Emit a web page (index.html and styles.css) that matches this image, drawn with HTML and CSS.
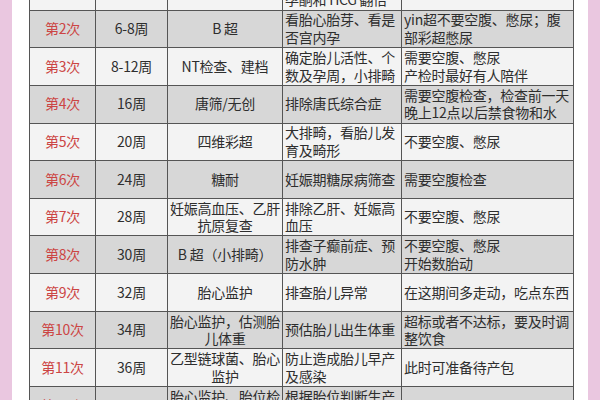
FILE: index.html
```html
<!DOCTYPE html>
<html lang="zh">
<head>
<meta charset="utf-8">
<link rel="stylesheet" href="styles.css">
</head>
<body>
<div class="page">
  <div class="strip"></div>
  <div class="sheet">
    <table class="plan">
      <colgroup>
        <col class="c1"><col class="c2"><col class="c3"><col class="c4"><col class="c5">
      </colgroup>
      <tbody>
        <tr><td class="no">第1次</td><td class="mid">5-6周</td><td class="mid">验血</td><td class="txt">确定是否怀孕，<br>孕酮和 HCG 翻倍</td><td class="txt">需要空腹</td></tr>
        <tr><td class="no">第2次</td><td class="mid">6-8周</td><td class="mid">B 超</td><td class="txt">看胎心胎芽、看是<br>否宫内孕</td><td class="txt">yin超不要空腹、憋尿；腹<br>部彩超憋尿</td></tr>
        <tr><td class="no">第3次</td><td class="mid">8-12周</td><td class="mid">NT检查、建档</td><td class="txt">确定胎儿活性、个<br>数及孕周，小排畸</td><td class="txt">需要空腹、憋尿<br>产检时最好有人陪伴</td></tr>
        <tr><td class="no">第4次</td><td class="mid">16周</td><td class="mid">唐筛/无创</td><td class="txt">排除唐氏综合症</td><td class="txt">需要空腹检查，检查前一天<br>晚上12点以后禁食物和水</td></tr>
        <tr><td class="no">第5次</td><td class="mid">20周</td><td class="mid">四维彩超</td><td class="txt">大排畸，看胎儿发<br>育及畸形</td><td class="txt">不要空腹、憋尿</td></tr>
        <tr><td class="no">第6次</td><td class="mid">24周</td><td class="mid">糖耐</td><td class="txt">妊娠期糖尿病筛查</td><td class="txt">需要空腹检查</td></tr>
        <tr><td class="no">第7次</td><td class="mid">28周</td><td class="mid">妊娠高血压、乙肝<br>抗原复查</td><td class="txt">排除乙肝、妊娠高<br>血压</td><td class="txt">不要空腹、憋尿</td></tr>
        <tr><td class="no">第8次</td><td class="mid">30周</td><td class="mid">B 超（小排畸）</td><td class="txt">排查子癫前症、预<br>防水肿</td><td class="txt">不要空腹、憋尿<br>开始数胎动</td></tr>
        <tr><td class="no">第9次</td><td class="mid">32周</td><td class="mid">胎心监护</td><td class="txt">排查胎儿异常</td><td class="txt">在这期间多走动，吃点东西</td></tr>
        <tr><td class="no">第10次</td><td class="mid">34周</td><td class="mid">胎心监护，估测胎<br>儿体重</td><td class="txt">预估胎儿出生体重</td><td class="txt">超标或者不达标，要及时调<br>整饮食</td></tr>
        <tr><td class="no">第11次</td><td class="mid">36周</td><td class="mid">乙型链球菌、胎心<br>监护</td><td class="txt">防止造成胎儿早产<br>及感染</td><td class="txt">此时可准备待产包</td></tr>
        <tr><td class="no">第12次</td><td class="mid">37周</td><td class="mid">胎心监护、胎位检<br>查</td><td class="txt">根据胎位判断生产<br>方式</td><td class="txt"></td></tr>
      </tbody>
    </table>
  </div>
  <div class="strip"></div>
</div>
</body>
</html>
```
FILE: styles.css
```css
html, body {
  margin: 0;
  padding: 0;
  background: #ffffff;
}
.page {
  display: flex;
  width: 600px;
  height: 400px;
  overflow: hidden;
}
.strip {
  width: 12px;
  flex: none;
  background: #eac7e0;
}
.sheet {
  flex: 1;
  padding-left: 17px;
  overflow: hidden;
}
.plan {
  margin-top: -28px;
  width: 544px;
  table-layout: fixed;
  border-collapse: collapse;
  font-family: "Noto Sans CJK SC", "Microsoft YaHei", sans-serif;
  font-size: 14px;
  line-height: 17.5px;
  letter-spacing: -0.25px;
  color: #2e2e2e;
}
.c1 { width: 66px; }
.c2 { width: 72px; }
.c3 { width: 115px; }
.c4 { width: 119px; }
.c5 { width: 172px; }
.plan tr {
  height: 37.65px;
}
.plan tr:nth-child(odd) { background: #f3f3f3; }
.plan tr:nth-child(even) { background: #d7d7d7; }
.plan td {
  border: 1px solid #555555;
  padding: 0 2px;
  vertical-align: middle;
  white-space: nowrap;
  overflow: hidden;
}
.no {
  text-align: center;
  color: #cc4544;
}
.mid {
  text-align: center;
}
.txt {
  text-align: left;
}
```
